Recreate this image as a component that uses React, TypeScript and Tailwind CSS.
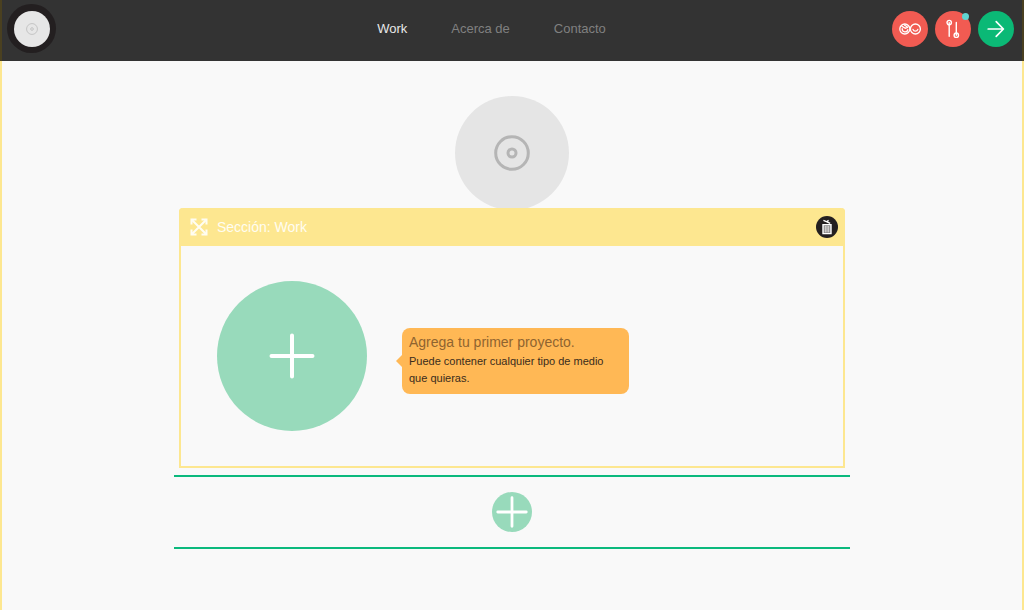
import { type ReactNode } from 'react'

const navItems = [
  { label: 'Work', href: '#work', active: true },
  { label: 'Acerca de', href: '#acerca-de', active: false },
  { label: 'Contacto', href: '#contacto', active: false },
]

const PlusIcon = ({ className, stroke }: { className: string; stroke: number }) => (
  <svg viewBox="0 0 46 46" className={className} fill="none" stroke="currentColor" strokeWidth={stroke} strokeLinecap="round" aria-hidden="true">
    <path d="M23 2.5v41M2.5 23h41" />
  </svg>
)

const DiscIcon = ({ className }: { className: string }) => (
  <svg viewBox="0 0 36 36" className={className} fill="none" stroke="currentColor" strokeWidth="3" aria-hidden="true">
    <circle cx="18" cy="18" r="16.3" />
    <circle cx="18" cy="18" r="4" />
  </svg>
)

const FacesIcon = () => (
  <svg viewBox="0 0 24 14" className="h-3.5 w-6" fill="none" stroke="currentColor" strokeWidth="1.3" strokeLinecap="round" aria-hidden="true">
    <circle cx="6.8" cy="7" r="5" />
    <circle cx="17.4" cy="7" r="5" />
    <path d="M4.2 6.6c-.2 4 5 4.4 5.6 1M15 7.4c.8 2.4 4 2.4 4.8 0" />
    <path d="M4 4.4l3.4 1.8 2.2-.8M6.6 3.2l2.6 1.6" />
  </svg>
)

const SlidersIcon = () => (
  <svg viewBox="0 0 14 20" className="h-5 w-3.5" fill="none" stroke="currentColor" strokeWidth="1.4" strokeLinecap="round" aria-hidden="true">
    <circle cx="3.2" cy="3.6" r="2.2" />
    <circle cx="10.3" cy="16.2" r="2.2" />
    <path d="M3.2 3.6v13.6M10.3 3.4v12.8" />
  </svg>
)

const ArrowIcon = () => (
  <svg viewBox="0 0 18 18" className="size-[18px]" fill="none" stroke="currentColor" strokeWidth="1.7" strokeLinecap="round" strokeLinejoin="round" aria-hidden="true">
    <path d="M1.2 9h15M9.2 1.6L16.4 9l-7.2 7.4" />
  </svg>
)

const ExpandIcon = () => (
  <svg viewBox="0 0 18 18" className="size-[18px]" fill="none" stroke="currentColor" strokeWidth="2" aria-hidden="true">
    <path d="M1.5 1.5l15 15M16.5 1.5l-15 15" />
    <path d="M1.5 6.5v-5h5M11.5 1.5h5v5M16.5 11.5v5h-5M6.5 16.5h-5v-5" />
  </svg>
)

const TrashIcon = () => (
  <svg viewBox="0 0 12 16" className="h-4 w-3" fill="none" stroke="currentColor" aria-hidden="true">
    <path d="M2 5.6h8v9H2z" strokeWidth="1.4" fill="#8a8788" />
    <path d="M4.3 7v6.4M6 7v6.4M7.7 7v6.4" strokeWidth=".7" />
    <path d="M2.4 1.4l3 1.2 3.8 1.8M5.6 2.8l2-1.4" strokeWidth="1.3" />
  </svg>
)

type RoundButtonProps = {
  label: string
  className: string
  children: ReactNode
}
const RoundButton = ({ label, className, children }: RoundButtonProps) => (
  <button
    type="button"
    aria-label={label}
    className={`relative flex shrink-0 items-center justify-center rounded-full text-white ${className}`}
  >
    {children}
  </button>
)

const Header = () => (
  <header className="grid grid-cols-[1fr_auto_1fr] items-center border-x-2 border-[#4a4020] bg-[#333333] pt-1 pr-2 pb-2 pl-[5px]">
    <a
      href="#inicio"
      aria-label="Inicio"
      className="flex size-[49px] items-center justify-center rounded-full bg-[#231f20]"
    >
      <span className="flex size-9 items-center justify-center rounded-full bg-[#e6e6e6] text-[#c4c4c4]">
        <DiscIcon className="size-3" />
      </span>
    </a>
    <nav className="pr-[38px]">
      <ul className="flex gap-11 text-[13px]">
        {navItems.map((item) => (
          <li key={item.label}>
            <a href={item.href} className={item.active ? 'text-[#e8e8e8]' : 'text-[#808080]'}>
              {item.label}
            </a>
          </li>
        ))}
      </ul>
    </nav>
    <div className="flex justify-end gap-[7px]">
      <RoundButton label="Vista previa" className="size-9 bg-[#f15b52]">
        <FacesIcon />
      </RoundButton>
      <RoundButton label="Ajustes" className="size-9 bg-[#f15b52]">
        <SlidersIcon />
        <span className="absolute top-0.5 right-0.5 size-[7px] rounded-full bg-[#5fd3d0]" />
      </RoundButton>
      <RoundButton label="Continuar" className="size-9 bg-[#0bb976]">
        <ArrowIcon />
      </RoundButton>
    </div>
  </header>
)

const Hint = () => (
  <div className="relative mt-2.5 w-[227px] rounded-lg bg-[#ffb855] px-[7px] pt-1 pb-[7px]">
    <span className="absolute top-1/2 -left-1.5 -translate-y-1/2 border-y-[6px] border-r-[6px] border-y-transparent border-r-[#ffb855]" />
    <h3 className="text-sm leading-[21px] text-[#8f6430]">Agrega tu primer proyecto.</h3>
    <p className="text-[11px] leading-[17px] text-[#3a2c1c]">
      Puede contener cualquier tipo de medio que quieras.
    </p>
  </div>
)

const WorkSection = () => (
  <section className="relative mx-[5px] -mt-0.5 rounded-t border-2 border-t-0 border-[#fde790]">
    <header className="-mx-0.5 flex h-[38px] items-center rounded-t bg-[#fde790] pr-[7px] pl-[11px] text-[#fffdf2]">
      <ExpandIcon />
      <h2 className="ml-[9px] flex-1 text-sm">Sección: Work</h2>
      <RoundButton label="Eliminar sección" className="size-[22px] bg-[#231f20]">
        <TrashIcon />
      </RoundButton>
    </header>
    <div className="flex items-center gap-[35px] px-9 py-[35px]">
      <RoundButton label="Agregar proyecto" className="size-[150px] bg-[#98dabb]">
        <PlusIcon className="size-[46px]" stroke={4} />
      </RoundButton>
      <Hint />
    </div>
  </section>
)

const App = () => (
  <div className="flex min-h-screen flex-col bg-[#f9f9f9] font-['Liberation_Sans',Arial,sans-serif]">
    <Header />
    <main className="flex-1 border-x-2 border-[#fde790] pt-[35px]">
      <div className="mx-auto max-w-[676px]">
        <div className="mx-auto flex size-[114px] items-center justify-center rounded-full bg-[#e5e5e5] text-[#b5b5b5]">
          <DiscIcon className="size-9" />
        </div>
        <WorkSection />
        <div className="mt-[7px] flex justify-center border-y-2 border-[#0bb97d] py-[15px]">
          <RoundButton label="Agregar sección" className="size-10 bg-[#98dabb]">
            <PlusIcon className="size-8" stroke={4} />
          </RoundButton>
        </div>
      </div>
    </main>
  </div>
)

export default App
